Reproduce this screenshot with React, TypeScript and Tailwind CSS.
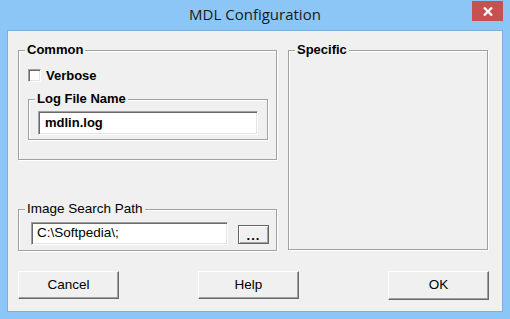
import React from "react";

const sunken =
  "border border-t-[#a0a0a0] border-l-[#a0a0a0] border-r-white border-b-white shadow-[inset_1px_1px_0_#696969,inset_-1px_-1px_0_#e3e3e3] bg-white";
const raised =
  "border border-t-white border-l-white border-r-[#696969] border-b-[#696969] shadow-[inset_-1px_-1px_0_#a0a0a0] bg-[#f0f0f0]";
const etched =
  "relative border border-[#a0a0a0] shadow-[inset_1px_1px_0_white,1px_1px_0_white]";

function Group({
  label,
  bold = false,
  className,
  children,
}: {
  label: string;
  bold?: boolean;
  className: string;
  children?: React.ReactNode;
}) {
  return (
    <div className={`${etched} ${className}`}>
      <span
        className={`absolute -top-[9px] left-[6px] px-[2px] bg-[#f0f0f0] leading-4 ${
          bold ? "font-bold text-[13px]" : "text-[13.5px]"
        }`}
      >
        {label}
      </span>
      {children}
    </div>
  );
}

export default function App() {
  return (
    <div
      className="w-[510px] h-[319px] bg-[#8bc6f7] flex flex-col text-black"
      style={{ fontFamily: '"Liberation Sans", Arial, sans-serif' }}
    >
      {/* title bar */}
      <div className="relative h-[30px] flex items-center justify-center">
        <span
          className="text-[15px] text-[#1a1a1a] -mt-[1px]"
          style={{ fontFamily: '"Open Sans", "Noto Sans", sans-serif' }}
        >
          MDL Configuration
        </span>
        <div className="absolute left-[472px] top-[1px] w-[31px] h-[20px] bg-[#c75050] flex items-center justify-center">
          <svg width="10" height="9" viewBox="0 0 10 9">
            <path d="M1 0.5 L9 8.5 M9 0.5 L1 8.5" stroke="white" strokeWidth="2.2" />
          </svg>
        </div>
      </div>

      {/* client area */}
      <div className="ml-[7px] w-[496px] h-[282px] border border-[#7fb0dd] bg-[#f0f0f0] flex flex-col px-[10px] pt-[19px]">
        <div className="flex">
          <div className="w-[259px] flex flex-col">
            <Group label="Common" bold className="h-[110px] pl-[9px] pt-[18px]">
              <div className="flex items-center h-[13px]">
                <div className={`w-[13px] h-[13px] ${sunken}`} />
                <span className="ml-[5px] text-[13px] font-bold leading-4">Verbose</span>
              </div>
              <Group label="Log File Name" bold className="mt-[17px] w-[240px] h-[41px] pl-[9px] pt-[11px]">
                <div className={`w-[220px] h-[24px] ${sunken} flex items-center pl-[6px]`}>
                  <span className="text-[13px] font-bold">mdlin.log</span>
                </div>
              </Group>
            </Group>
            <Group label="Image Search Path" className="mt-[49px] h-[42px] pl-[12px] pt-[12px]">
              <div className="flex">
                <div className={`w-[197px] h-[23px] ${sunken} flex items-center pl-[5px]`}>
                  <span className="text-[13.5px]">C:\Softpedia\;</span>
                </div>
                <div className="ml-[10px] mt-[3px] w-[31px] h-[19px] border border-[#646464] bg-[#f0f0f0] shadow-[inset_1px_1px_0_white,inset_-1px_-1px_0_#a0a0a0] flex items-end justify-center">
                  <span className="text-[13px] font-bold leading-[14px] tracking-[1px]">...</span>
                </div>
              </div>
            </Group>
          </div>
          <Group label="Specific" bold className="ml-[11px] w-[200px] h-[200px]" />
        </div>

        <div className="flex mt-[20px] text-[13.5px]">
          <div className={`w-[101px] h-[28px] ${raised} flex items-center justify-center`}>Cancel</div>
          <div className={`ml-[79px] w-[101px] h-[28px] ${raised} flex items-center justify-center`}>Help</div>
          <div className={`ml-[89px] w-[101px] h-[29px] ${raised} flex items-center justify-center`}>OK</div>
        </div>
      </div>
    </div>
  );
}
